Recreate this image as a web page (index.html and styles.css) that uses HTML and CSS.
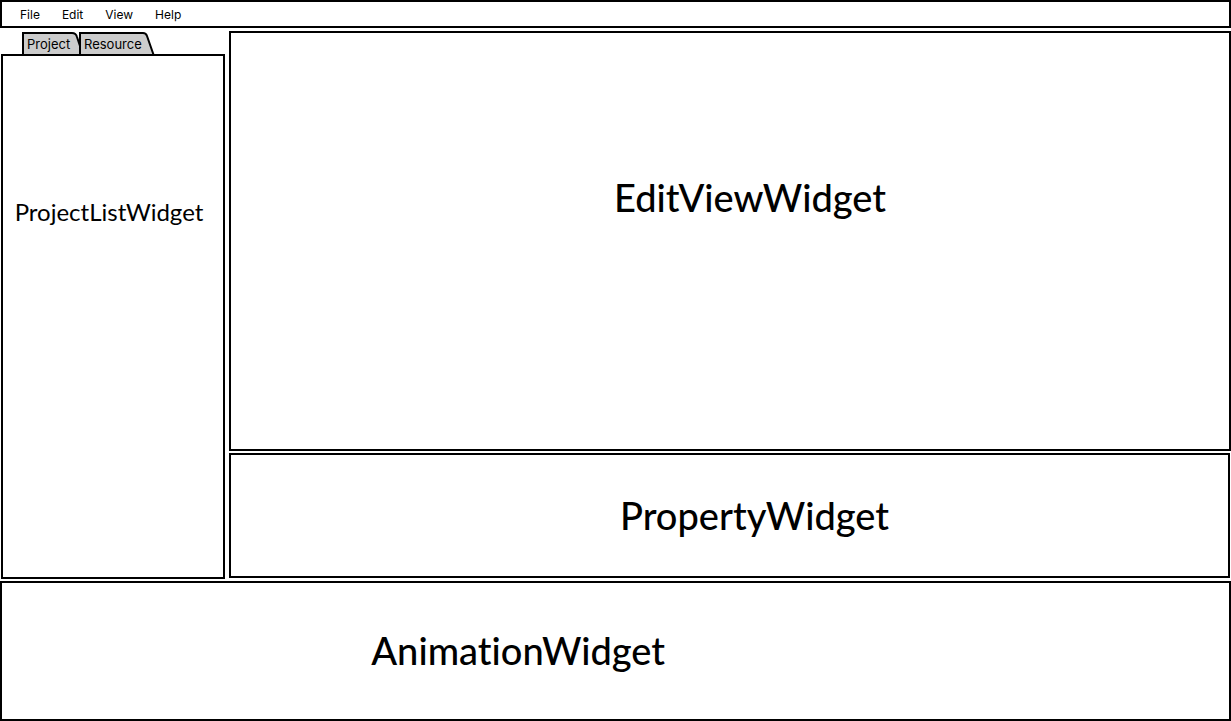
FILE: index.html
```html
<!DOCTYPE html>
<html lang="en">
<head>
<meta charset="utf-8">
<title>Editor layout</title>
<link rel="stylesheet" href="styles.css">
</head>
<body>
<div class="app">
  <nav class="menubar">
    <button class="menu-item" type="button">File</button>
    <button class="menu-item" type="button">Edit</button>
    <button class="menu-item" type="button">View</button>
    <button class="menu-item" type="button">Help</button>
  </nav>
  <main class="workspace">
    <aside class="sidebar">
      <div class="tabs" role="tablist">
        <button class="tab tab-project" type="button" role="tab" aria-selected="true">
          <svg class="tab-shape" viewBox="0 0 59 24" preserveAspectRatio="none" aria-hidden="true"><path d="M1 24V1H50Q54 1 55 5L58 14V24"/></svg>
          <span class="tab-label">Project</span>
        </button>
        <button class="tab tab-resource" type="button" role="tab" aria-selected="false">
          <svg class="tab-shape" viewBox="0 0 76 24" preserveAspectRatio="none" aria-hidden="true"><path d="M1 24V1H64Q67 1 68 4L75 24"/></svg>
          <span class="tab-label">Resource</span>
        </button>
      </div>
      <section class="panel project-list"><h2 class="title title-small">ProjectListWidget</h2></section>
    </aside>
    <div class="content">
      <section class="panel edit-view"><h2 class="title">EditViewWidget</h2></section>
      <section class="panel property"><h2 class="title">PropertyWidget</h2></section>
    </div>
  </main>
  <section class="panel animation"><h2 class="title">AnimationWidget</h2></section>
</div>
</body>
</html>
```
FILE: styles.css
```css
* { box-sizing: border-box; }
body {
  margin: 0;
  background: #fff;
  color: #000;
  font-family: Lato, "Liberation Sans", sans-serif;
}
.app {
  display: grid;
  grid-template-rows: auto 553fr 140fr;
  min-height: 100vh;
}
.menubar {
  display: flex;
  gap: 22px;
  padding: 5px 18px 3px;
  border: 2px solid #000;
}
.menu-item, .tab {
  border: 0;
  padding: 0;
  background: none;
  color: #000;
  font-family: Inter, sans-serif;
  font-size: 12px;
  line-height: 16px;
}
.workspace {
  display: grid;
  grid-template-columns: 224fr 1002fr;
  gap: 4px;
  padding: 3px 0 2px 1px;
}
.sidebar {
  display: flex;
  flex-direction: column;
  padding-top: 1px;
}
.tabs {
  display: flex;
  padding-left: 21px;
}
.tab {
  position: relative;
  height: 24px;
  margin-bottom: -2px;
  text-align: left;
  padding-left: 5px;
  font-size: 13px;
}
.tab-project { width: 59px; }
.tab-resource { width: 76px; margin-left: -2px; }
.tab-shape {
  position: absolute;
  inset: 0;
  width: 100%;
  height: 100%;
  fill: #ccc;
  stroke: #000;
  stroke-width: 2;
}
.tab-label { position: relative; }
.panel {
  display: flex;
  justify-content: center;
  border: 2px solid #000;
}
.project-list {
  position: relative;
  flex: 1;
  padding-top: 141px;
  padding-right: 8px;
  background: #fff;
}
.content {
  display: grid;
  grid-template-rows: 420fr 125fr;
  gap: 2px;
  padding-bottom: 1px;
}
.edit-view {
  align-items: center;
  padding-left: 4%;
  padding-bottom: 88px;
}
.property {
  align-items: center;
  margin-right: 1px;
  padding-left: 5%;
  padding-bottom: 2px;
}
.animation {
  align-items: center;
  justify-content: flex-start;
  padding-left: 30%;
  padding-bottom: 2px;
}
.title {
  margin: 0;
  font-size: 38px;
  line-height: 48px;
  font-weight: 500;
  font-variant-ligatures: none;
}
.title-small {
  font-size: 24px;
  line-height: 30px;
  font-weight: 400;
}
```
